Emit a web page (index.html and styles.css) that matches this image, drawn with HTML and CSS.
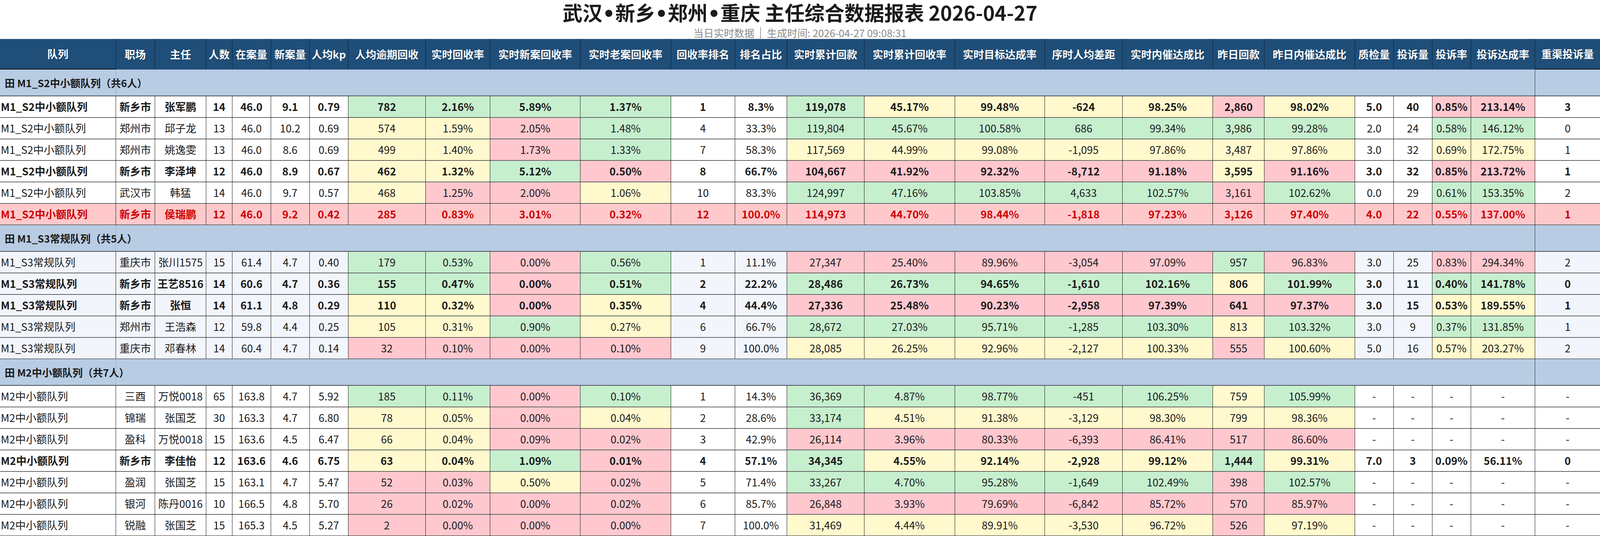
FILE: index.html
```html
<!DOCTYPE html>
<html lang="zh-CN">
<head>
<meta charset="utf-8">
<title>武汉•新乡•郑州•重庆 主任综合数据报表</title>
<link rel="stylesheet" href="styles.css">
</head>
<body>
<main class="page">
<header class="title-block">
  <h1 class="title">武汉<span class="dot">•</span>新乡<span class="dot">•</span>郑州<span class="dot">•</span>重庆 主任综合数据报表 2026-04-27</h1>
  <div class="subtitle">当日实时数据<span class="sep"></span>生成时间: 2026-04-27 09:08:31</div>
</header>
<table class="report">
  <colgroup>
    <col class="w348"><col class="w117"><col class="w154"><col class="w78"><col class="w116"><col class="w116"><col class="w116"><col class="w232"><col class="w194"><col class="w271"><col class="w271"><col class="w193"><col class="w155"><col class="w233"><col class="w271"><col class="w270"><col class="w233"><col class="w271"><col class="w155"><col class="w271"><col class="w116"><col class="w116"><col class="w116"><col class="w193"><col class="w194">
  </colgroup>
  <thead>
    <tr class="head-row">
      <th class="first">队列</th><th>职场</th><th>主任</th><th>人数</th><th>在案量</th><th>新案量</th><th>人均kp</th><th>人均逾期回收</th><th>实时回收率</th><th>实时新案回收率</th><th>实时老案回收率</th><th>回收率排名</th><th>排名占比</th><th>实时累计回款</th><th>实时累计回收率</th><th>实时目标达成率</th><th>序时人均差距</th><th>实时内催达成比</th><th>昨日回款</th><th>昨日内催达成比</th><th>质检量</th><th>投诉量</th><th>投诉率</th><th>投诉达成率</th><th class="last">重渠投诉量</th>
    </tr>
  </thead>
  <tbody>
    <tr class="group-row">
      <td class="first"><span class="group-label">田 M1_S2中小额队列（共6人）</span></td><td class="group-fill" colspan="23"></td><td class="last"></td>
    </tr>
    <tr class="row b">
      <td class="first">M1_S2中小额队列</td><td>新乡市</td><td>张军鹏</td><td>14</td><td>46.0</td><td>9.1</td><td>0.79</td><td class="g">782</td><td class="g">2.16%</td><td class="g">5.89%</td><td class="g">1.37%</td><td>1</td><td>8.3%</td><td class="g">119,078</td><td class="y">45.17%</td><td class="y">99.48%</td><td class="y">-624</td><td class="y">98.25%</td><td class="p">2,860</td><td class="y">98.02%</td><td>5.0</td><td>40</td><td class="p">0.85%</td><td class="p">213.14%</td><td class="last">3</td>
    </tr>
    <tr class="row">
      <td class="first">M1_S2中小额队列</td><td>郑州市</td><td>邱子龙</td><td>13</td><td>46.0</td><td>10.2</td><td>0.69</td><td class="y">574</td><td class="y">1.59%</td><td class="p">2.05%</td><td class="g">1.48%</td><td>4</td><td>33.3%</td><td class="g">119,804</td><td class="g">45.67%</td><td class="g">100.58%</td><td class="g">686</td><td class="g">99.34%</td><td class="g">3,986</td><td class="g">99.28%</td><td>2.0</td><td>24</td><td class="g">0.58%</td><td class="g">146.12%</td><td class="last">0</td>
    </tr>
    <tr class="row">
      <td class="first">M1_S2中小额队列</td><td>郑州市</td><td>姚逸雯</td><td>13</td><td>46.0</td><td>8.6</td><td>0.69</td><td class="y">499</td><td class="y">1.40%</td><td class="p">1.73%</td><td class="g">1.33%</td><td>7</td><td>58.3%</td><td class="y">117,569</td><td class="y">44.99%</td><td class="y">99.08%</td><td class="y">-1,095</td><td class="y">97.86%</td><td class="y">3,487</td><td class="y">97.86%</td><td>3.0</td><td>32</td><td class="y">0.69%</td><td class="y">172.75%</td><td class="last">1</td>
    </tr>
    <tr class="row b">
      <td class="first">M1_S2中小额队列</td><td>新乡市</td><td>李泽坤</td><td>12</td><td>46.0</td><td>8.9</td><td>0.67</td><td class="y">462</td><td class="y">1.32%</td><td class="g">5.12%</td><td class="p">0.50%</td><td>8</td><td>66.7%</td><td class="p">104,667</td><td class="p">41.92%</td><td class="p">92.32%</td><td class="p">-8,712</td><td class="p">91.18%</td><td class="y">3,595</td><td class="p">91.16%</td><td>3.0</td><td>32</td><td class="p">0.85%</td><td class="p">213.72%</td><td class="last">1</td>
    </tr>
    <tr class="row">
      <td class="first">M1_S2中小额队列</td><td>武汉市</td><td>韩猛</td><td>14</td><td>46.0</td><td>9.7</td><td>0.57</td><td class="y">468</td><td class="p">1.25%</td><td class="p">2.00%</td><td class="y">1.06%</td><td>10</td><td>83.3%</td><td class="g">124,997</td><td class="g">47.16%</td><td class="g">103.85%</td><td class="g">4,633</td><td class="g">102.57%</td><td class="p">3,161</td><td class="g">102.62%</td><td>0.0</td><td>29</td><td class="g">0.61%</td><td class="g">153.35%</td><td class="last">2</td>
    </tr>
    <tr class="row b hl">
      <td class="first">M1_S2中小额队列</td><td>新乡市</td><td>侯瑞鹏</td><td>12</td><td>46.0</td><td>9.2</td><td>0.42</td><td>285</td><td>0.83%</td><td>3.01%</td><td>0.32%</td><td>12</td><td>100.0%</td><td>114,973</td><td>44.70%</td><td>98.44%</td><td>-1,818</td><td>97.23%</td><td>3,126</td><td>97.40%</td><td>4.0</td><td>22</td><td>0.55%</td><td>137.00%</td><td class="last">1</td>
    </tr>

    <tr class="group-row">
      <td class="first"><span class="group-label">田 M1_S3常规队列（共5人）</span></td><td class="group-fill" colspan="23"></td><td class="last"></td>
    </tr>
    <tr class="row tint">
      <td class="first">M1_S3常规队列</td><td>重庆市</td><td>张川1575</td><td>15</td><td>61.4</td><td>4.7</td><td>0.40</td><td class="g">179</td><td class="g">0.53%</td><td class="p">0.00%</td><td class="g">0.56%</td><td>1</td><td>11.1%</td><td class="p">27,347</td><td class="p">25.40%</td><td class="p">89.96%</td><td class="p">-3,054</td><td class="p">97.09%</td><td class="g">957</td><td class="p">96.83%</td><td>3.0</td><td>25</td><td class="p">0.83%</td><td class="p">294.34%</td><td class="last">2</td>
    </tr>
    <tr class="row tint b">
      <td class="first">M1_S3常规队列</td><td>新乡市</td><td>王艺8516</td><td>14</td><td>60.6</td><td>4.7</td><td>0.36</td><td class="g">155</td><td class="g">0.47%</td><td class="p">0.00%</td><td class="g">0.51%</td><td>2</td><td>22.2%</td><td class="g">28,486</td><td class="g">26.73%</td><td class="g">94.65%</td><td class="g">-1,610</td><td class="g">102.16%</td><td class="y">806</td><td class="g">101.99%</td><td>3.0</td><td>11</td><td class="g">0.40%</td><td class="g">141.78%</td><td class="last">0</td>
    </tr>
    <tr class="row tint b">
      <td class="first">M1_S3常规队列</td><td>新乡市</td><td>张恒</td><td>14</td><td>61.1</td><td>4.8</td><td>0.29</td><td class="y">110</td><td class="y">0.32%</td><td class="p">0.00%</td><td class="y">0.35%</td><td>4</td><td>44.4%</td><td class="p">27,336</td><td class="p">25.48%</td><td class="p">90.23%</td><td class="p">-2,958</td><td class="p">97.39%</td><td class="p">641</td><td class="p">97.37%</td><td>3.0</td><td>15</td><td class="y">0.53%</td><td class="y">189.55%</td><td class="last">1</td>
    </tr>
    <tr class="row tint">
      <td class="first">M1_S3常规队列</td><td>郑州市</td><td>王浩森</td><td>12</td><td>59.8</td><td>4.4</td><td>0.25</td><td class="y">105</td><td class="y">0.31%</td><td class="g">0.90%</td><td class="y">0.27%</td><td>6</td><td>66.7%</td><td class="g">28,672</td><td class="g">27.03%</td><td class="g">95.71%</td><td class="g">-1,285</td><td class="g">103.30%</td><td class="y">813</td><td class="g">103.32%</td><td>3.0</td><td>9</td><td class="g">0.37%</td><td class="g">131.85%</td><td class="last">1</td>
    </tr>
    <tr class="row tint">
      <td class="first">M1_S3常规队列</td><td>重庆市</td><td>邓春林</td><td>14</td><td>60.4</td><td>4.7</td><td>0.14</td><td class="p">32</td><td class="p">0.10%</td><td class="p">0.00%</td><td class="p">0.10%</td><td>9</td><td>100.0%</td><td class="y">28,085</td><td class="y">26.25%</td><td class="y">92.96%</td><td class="y">-2,127</td><td class="y">100.33%</td><td class="p">555</td><td class="y">100.60%</td><td>5.0</td><td>16</td><td class="y">0.57%</td><td class="y">203.27%</td><td class="last">2</td>
    </tr>

    <tr class="group-row">
      <td class="first"><span class="group-label">田 M2中小额队列（共7人）</span></td><td class="group-fill" colspan="23"></td><td class="last"></td>
    </tr>
    <tr class="row">
      <td class="first">M2中小额队列</td><td>三酉</td><td>万悦0018</td><td>65</td><td>163.8</td><td>4.7</td><td>5.92</td><td class="g">185</td><td class="g">0.11%</td><td class="p">0.00%</td><td class="g">0.10%</td><td>1</td><td>14.3%</td><td class="g">36,369</td><td class="g">4.87%</td><td class="g">98.77%</td><td class="g">-451</td><td class="g">106.25%</td><td class="y">759</td><td class="g">105.99%</td><td>-</td><td>-</td><td>-</td><td>-</td><td class="last">-</td>
    </tr>
    <tr class="row">
      <td class="first">M2中小额队列</td><td>锦瑞</td><td>张国芝</td><td>30</td><td>163.3</td><td>4.7</td><td>6.80</td><td class="y">78</td><td class="y">0.05%</td><td class="p">0.00%</td><td class="y">0.04%</td><td>2</td><td>28.6%</td><td class="g">33,174</td><td class="y">4.51%</td><td class="y">91.38%</td><td class="y">-3,129</td><td class="y">98.30%</td><td class="y">799</td><td class="y">98.36%</td><td>-</td><td>-</td><td>-</td><td>-</td><td class="last">-</td>
    </tr>
    <tr class="row">
      <td class="first">M2中小额队列</td><td>盈科</td><td>万悦0018</td><td>15</td><td>163.6</td><td>4.5</td><td>6.47</td><td class="y">66</td><td class="y">0.04%</td><td class="p">0.09%</td><td class="p">0.02%</td><td>3</td><td>42.9%</td><td class="p">26,114</td><td class="p">3.96%</td><td class="p">80.33%</td><td class="p">-6,393</td><td class="p">86.41%</td><td class="p">517</td><td class="p">86.60%</td><td>-</td><td>-</td><td>-</td><td>-</td><td class="last">-</td>
    </tr>
    <tr class="row b">
      <td class="first">M2中小额队列</td><td>新乡市</td><td>李佳怡</td><td>12</td><td>163.6</td><td>4.6</td><td>6.75</td><td class="y">63</td><td class="y">0.04%</td><td class="g">1.09%</td><td class="p">0.01%</td><td>4</td><td>57.1%</td><td class="g">34,345</td><td class="y">4.55%</td><td class="y">92.14%</td><td class="y">-2,928</td><td class="y">99.12%</td><td class="g">1,444</td><td class="y">99.31%</td><td>7.0</td><td>3</td><td>0.09%</td><td>56.11%</td><td class="last">0</td>
    </tr>
    <tr class="row">
      <td class="first">M2中小额队列</td><td>盈润</td><td>张国芝</td><td>15</td><td>163.1</td><td>4.7</td><td>5.47</td><td class="p">52</td><td class="p">0.03%</td><td class="y">0.50%</td><td class="p">0.02%</td><td>5</td><td>71.4%</td><td class="g">33,267</td><td class="g">4.70%</td><td class="g">95.28%</td><td class="g">-1,649</td><td class="g">102.49%</td><td class="p">398</td><td class="g">102.57%</td><td>-</td><td>-</td><td>-</td><td>-</td><td class="last">-</td>
    </tr>
    <tr class="row">
      <td class="first">M2中小额队列</td><td>银河</td><td>陈丹0016</td><td>10</td><td>166.5</td><td>4.8</td><td>5.70</td><td class="p">26</td><td class="p">0.02%</td><td class="p">0.00%</td><td class="p">0.02%</td><td>6</td><td>85.7%</td><td class="p">26,848</td><td class="p">3.93%</td><td class="p">79.69%</td><td class="p">-6,842</td><td class="p">85.72%</td><td class="p">570</td><td class="p">85.97%</td><td>-</td><td>-</td><td>-</td><td>-</td><td class="last">-</td>
    </tr>
    <tr class="row">
      <td class="first">M2中小额队列</td><td>锐融</td><td>张国芝</td><td>15</td><td>165.3</td><td>4.5</td><td>5.27</td><td class="p">2</td><td class="p">0.00%</td><td class="p">0.00%</td><td class="p">0.00%</td><td>7</td><td>100.0%</td><td class="y">31,469</td><td class="y">4.44%</td><td class="y">89.91%</td><td class="y">-3,530</td><td class="y">96.72%</td><td class="p">526</td><td class="y">97.19%</td><td>-</td><td>-</td><td>-</td><td>-</td><td class="last">-</td>
    </tr>
  </tbody>
</table>
</main>
</body>
</html>
```

FILE: styles.css
```css
html, body {
  margin: 0;
  padding: 0;
  background: #ffffff;
}

body {
  overflow: hidden;
  font-family: "Noto Sans CJK SC", "Noto Sans", "DejaVu Sans", sans-serif;
  color: #1a1a1a;
}

.page {
  display: block;
  width: 100%;
  max-width: 4096px;
}

/* ---------- title block ---------- */
.title-block {
  height: 99px;
  border-bottom: 1px solid #c8c8c8;
  text-align: center;
}

.title {
  margin: 0;
  font-size: 51px;
  line-height: 62px;
  font-weight: 700;
  color: #1a1a1a;
  white-space: nowrap;
}

.dot {
  font-family: "DejaVu Sans", sans-serif;
  font-weight: 700;
}

.subtitle {
  font-size: 26px;
  line-height: 34px;
  color: #8a8a8a;
  white-space: nowrap;
}

.sep {
  display: inline-block;
  width: 0;
  height: 31px;
  border-left: 2px solid #a0a0a0;
  margin: 0 15px;
  vertical-align: -6px;
}

/* ---------- table ---------- */
.report {
  width: 100%;
  table-layout: fixed;
  border-collapse: separate;
  border-spacing: 0;
  font-size: 27px;
}

.w78 { width: 1.625%; }
.w116 { width: 2.4167%; }
.w117 { width: 2.4375%; }
.w154 { width: 3.2083%; }
.w155 { width: 3.2292%; }
.w193 { width: 4.0208%; }
.w194 { width: 4.0417%; }
.w232 { width: 4.8333%; }
.w233 { width: 4.8542%; }
.w270 { width: 5.625%; }
.w271 { width: 5.6458%; }
.w348 { width: 7.25%; }

.report th,
.report td {
  padding: 0;
  text-align: center;
  vertical-align: middle;
  white-space: nowrap;
  line-height: 34px;
}

/* header */
.head-row {
  height: 78px;
}

.report th {
  background: #1f4e79;
  color: #ffffff;
  font-weight: 700;
  font-size: 27px;
  border-right: 1px solid #0b1f33;
  text-shadow: 1px 1px 1px rgba(0, 0, 0, 0.35);
}

.report th.first,
.report th.last {
  border-bottom: 2px solid #111111;
}

.report th.last {
  border-right: none;
}

/* group rows */
.group-row {
  height: 68px;
}

.group-row td {
  background: #b8cce4;
  border-bottom: 1px solid #2b2b2b;
  box-shadow: inset 0 -1px 0 #8a9bb0;
}

.group-row td.first {
  text-align: left;
  padding-left: 12px;
  border-right: 1px solid #93a9c6;
  overflow: visible;
}

.group-row td.group-fill {
  border-right: 1px solid #2b2b2b;
}

.group-label {
  font-size: 26px;
  font-weight: 700;
  color: #1a1a1a;
}

/* data rows */
.row {
  height: 55px;
}

.row td {
  background: #ffffff;
  color: #1a1a1a;
  font-weight: 400;
  border-right: 1px solid #1a1a1a;
  border-bottom: 1px solid #1a1a1a;
  box-shadow: inset 0 1px 0 #b4b4b4;
}

.row td.first {
  text-align: left;
  padding-left: 2px;
}

.row td.last {
  border-right: none;
}

.row.tint td {
  background: #f2f5fb;
}

.row.b td {
  font-weight: 700;
}

.report .row td.g {
  background: #c6efce;
}

.report .row td.y {
  background: #fff9cd;
}

.report .row td.p {
  background: #ffc7ce;
}

.report .row.hl td {
  background: #ffc9cc;
  color: #cc0000;
}
```
